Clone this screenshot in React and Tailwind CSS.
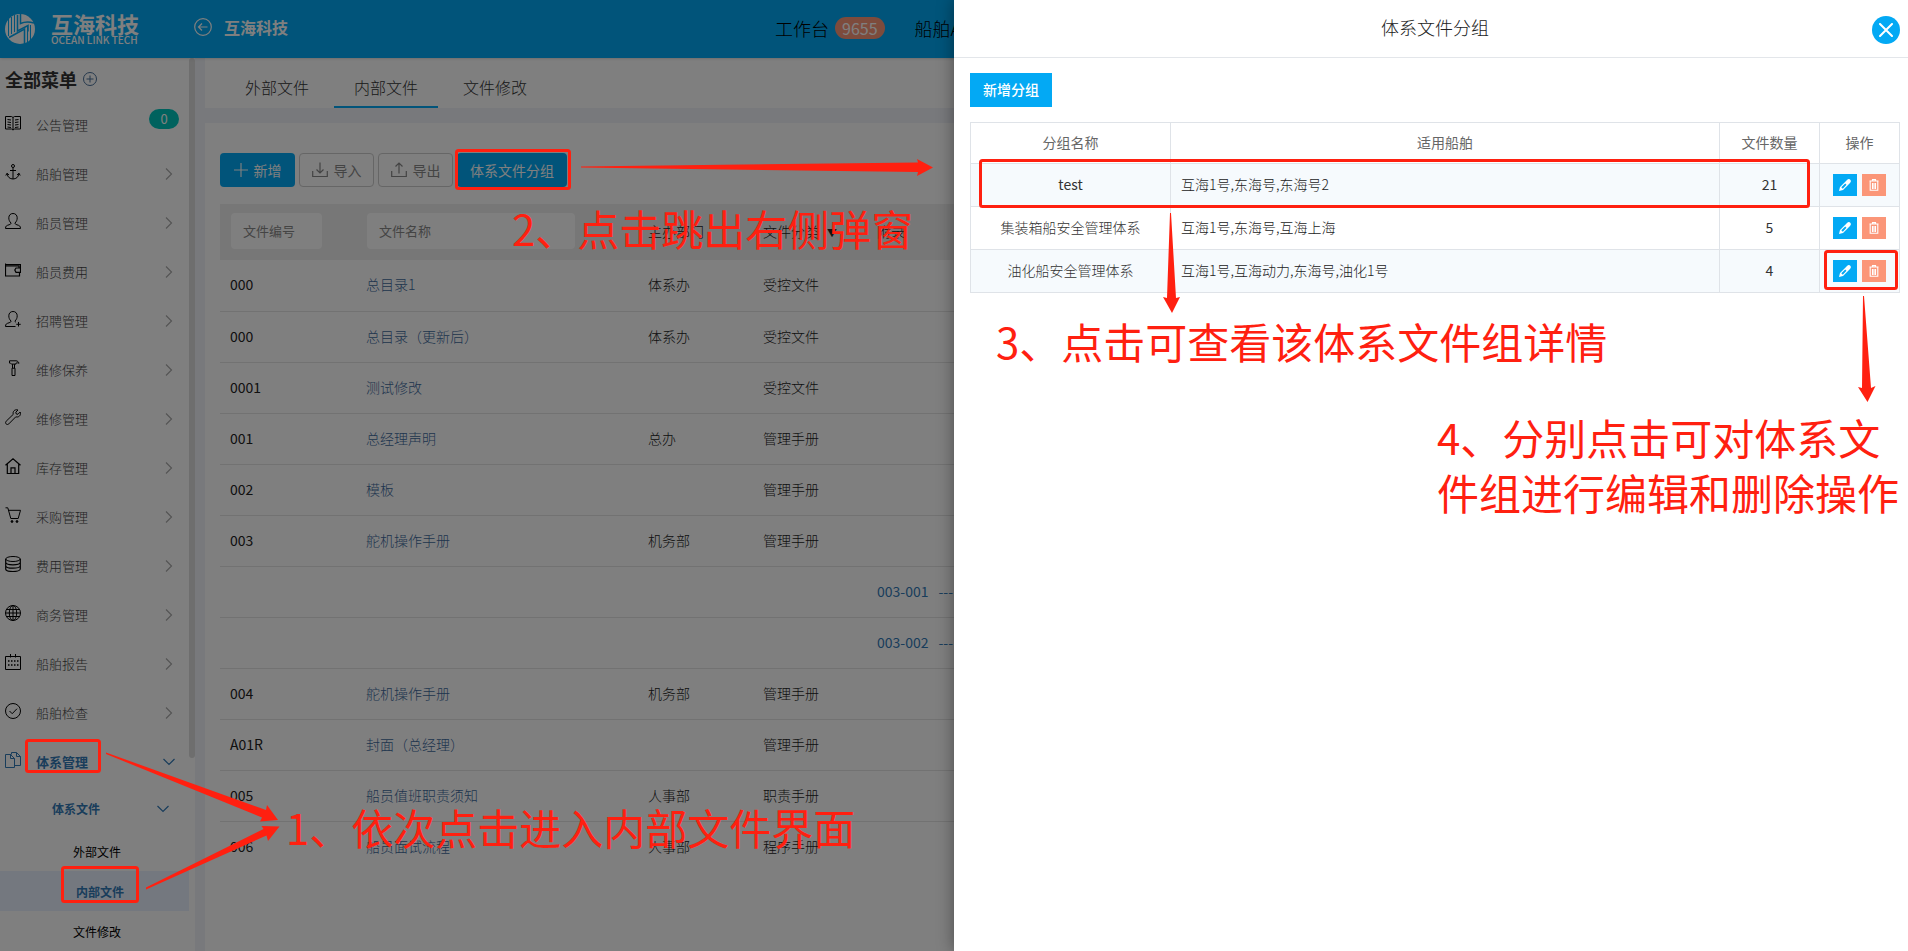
import { useState } from "react";

const fontStack = "font-['Noto_Sans_CJK_SC',sans-serif]";

/* ---------- icons ---------- */

const Icon = ({ children, className = "w-4 h-4" }) => (
    <svg
        viewBox="0 0 16 16"
        className={`flex-shrink-0 ${className}`}
        fill="none"
        stroke="currentColor"
        strokeWidth="1"
        aria-hidden="true"
    >
        {children}
    </svg>
);

const BookIcon = () => (
    <Icon>
        <path d="M8 2.500 6.500 1.500H.5v12.500h6L8 15l1.500-1h6V1.500h-6L8 2.500V15" />
        <path d="M2.500 4.500 6 5M2.500 7 6 7.500M2.500 9.500 6 10M2.500 12 6 12.500M13.500 4.500 10 5M13.500 7 10 7.500M13.500 9.500 10 10M13.500 12 10 12.500" />
    </Icon>
);

const AnchorIcon = () => (
    <Icon>
        <circle cx="8" cy="2" r="1.500" />
        <path d="M8 3.500V15M5 6.500h6M.8 11.500 2 9.300l2 1.700M15.200 11.500 14 9.300 12 11M2 9.500C2.300 13 5 15 8 15s5.700-2 6-5.500" />
    </Icon>
);

const UserIcon = () => (
    <Icon>
        <path d="M6 10C4.500 8.500 3.800 7 3.800 4.800 3.800 2.200 5.500.5 8 .5s4.200 1.700 4.200 4.300c0 2.200-.7 3.700-2.200 5.200 0 1 .5 1.300 2 1.800 2.200.7 3.500 1 3.500 3.700H.5c0-2.700 1.300-3 3.500-3.700 1.500-.5 2-.8 2-1.800Z" />
    </Icon>
);

const UserPlusIcon = () => (
    <Icon>
        <path d="M10.500 15.500H.5c0-2.700 1.300-3 3.500-3.700 1.500-.5 2-.8 2-1.800C4.500 8.500 3.800 7 3.800 4.800 3.800 2.200 5.500.5 8 .5s4.200 1.700 4.200 4.300c0 2.200-.7 3.700-2.200 5.200 0 .6.200 1 .8 1.300M13.500 11v4.500M11.300 13.300h4.400" />
    </Icon>
);

const WalletIcon = () => (
    <Icon>
        <path d="M.5 2.500h15v3M.5 1.500v12.500h14v-3.500M.5 3.800h13.500v2M15.500 6H11l-1.200 2L11 10.300h4.500Z" strokeWidth="1.200" />
    </Icon>
);

const HammerIcon = () => (
    <Icon>
        <path d="M4.500.8h6.500c1.500 0 2.500 1 3 2.500-1.200-.6-2-.6-3-.2v1H7c-.8 0-1-1-2.500-1ZM7.500 4.200v4M9.500 4.200v4M7 8.200h3v7.300H7Z" />
    </Icon>
);

const WrenchIcon = () => (
    <Icon>
        <path d="M13 1 10.800 3.200l.4 1.700 1.700.4L15.200 3c.6 1.800.2 3.200-.8 4.100-1 .9-2.300 1.100-3.600.7l-7 7.100c-.8.800-2 .8-2.700 0-.7-.7-.7-1.900.1-2.700L8.300 5.300C7.900 4 8.100 2.800 9 1.800c.9-1 2.400-1.300 4-.8Z" />
    </Icon>
);

const HomeIcon = () => (
    <Icon>
        <path d="M.5 7.300 8 .8l7.500 6.500M2.300 6v9.500h11.400V6M6 15.500V9.800h4v5.700" strokeWidth="1.200" />
    </Icon>
);

const CartIcon = () => (
    <Icon>
        <path d="M.5.800h2.300l3 10.700h7.400l2.300-8.200H3.600" />
        <circle cx="7" cy="14.500" r=".9" fill="currentColor" />
        <circle cx="12" cy="14.500" r=".9" fill="currentColor" />
    </Icon>
);

const CoinsIcon = () => (
    <Icon>
        <ellipse cx="8" cy="3" rx="7.300" ry="2.500" />
        <path
            d="M.7 3v10c0 1.400 3.300 2.500 7.300 2.500s7.300-1.100 7.300-2.500V3M.7 6.300c0 1.400 3.300 2.500 7.300 2.500s7.300-1.100 7.300-2.500M.7 9.700c0 1.400 3.300 2.500 7.300 2.500s7.300-1.100 7.300-2.500"
            strokeWidth="1.200"
        />
    </Icon>
);

const GlobeIcon = () => (
    <Icon>
        <circle cx="8" cy="8" r="7.500" />
        <ellipse cx="8" cy="8" rx="3.700" ry="7.500" />
        <path d="M8 .5v15M.5 8h15M1.500 4.500h13M1.500 11.500h13" />
    </Icon>
);

const CalendarIcon = () => (
    <Icon>
        <path d="M.5 2.500h15v13H.5ZM5.500 0v3.500M10.500 0v3.500" />
        <path d="M3 7h1.500M6 7h1.500M9 7h1.500M12 7h1.500M3 11h1.500M6 11h1.500M9 11h1.500M12 11h1.500" strokeWidth="1.500" />
    </Icon>
);

const CheckIcon = () => (
    <Icon>
        <circle cx="8" cy="8" r="7.500" />
        <path d="m4.500 8 2.700 2.700 4.800-5" />
    </Icon>
);

const FilesIcon = () => (
    <Icon>
        <path d="M6 2.500H.5v13h9V6.500l-4-4v4h4M6.500 2.500v-2h5l4 4v9h-6M11.500.5v4h4" />
    </Icon>
);

const Chevron = ({ down }) => (
    <svg viewBox="0 0 12 12" className="w-3 h-3" fill="none" stroke="currentColor" strokeWidth="1.200" aria-hidden="true">
        {down ? <path d="M.5 3 6 8.500 11.500 3" /> : <path d="M3 .5 8.500 6 3 11.500" />}
    </svg>
);

const LogoMark = () => (
    <svg viewBox="0 0 30 30" className="w-[30px] h-[30px]" aria-hidden="true">
        <circle cx="15" cy="15" r="15" fill="#fff" />
        <g fill="none" stroke="#03a9f4">
            <path d="M3.500 5v17M6.500 3v17M9.500 1v17" />
            <path d="M15.500 0v9.500C20 7.500 24 7.500 29 9" strokeWidth="1.500" />
            <path d="M12.500 1v16L23 11.500v6" strokeWidth="1.500" />
            <path d="M4 23.500 19.500 15v15" strokeWidth="1.500" />
            <path d="M22.500 13v16M25.500 11v15" />
        </g>
    </svg>
);

/* ---------- data ---------- */

const menuItems = [
    { name: "公告管理", icon: BookIcon, badge: 0 },
    { name: "船舶管理", icon: AnchorIcon },
    { name: "船员管理", icon: UserIcon },
    { name: "船员费用", icon: WalletIcon },
    { name: "招聘管理", icon: UserPlusIcon },
    { name: "维修保养", icon: HammerIcon },
    { name: "维修管理", icon: WrenchIcon },
    { name: "库存管理", icon: HomeIcon },
    { name: "采购管理", icon: CartIcon },
    { name: "费用管理", icon: CoinsIcon },
    { name: "商务管理", icon: GlobeIcon },
    { name: "船舶报告", icon: CalendarIcon },
    { name: "船舶检查", icon: CheckIcon },
    { name: "体系管理", icon: FilesIcon, open: true }
];

const subItems = ["外部文件", "内部文件", "文件修改"];

const files = [
    { code: "000", name: "总目录1", dept: "体系办", type: "受控文件" },
    { code: "000", name: "总目录（更新后）", dept: "体系办", type: "受控文件" },
    { code: "0001", name: "测试修改", dept: "", type: "受控文件" },
    { code: "001", name: "总经理声明", dept: "总办", type: "管理手册" },
    { code: "002", name: "模板", dept: "", type: "管理手册" },
    { code: "003", name: "舵机操作手册", dept: "机务部", type: "管理手册" },
    { child: "003-001" },
    { child: "003-002" },
    { code: "004", name: "舵机操作手册", dept: "机务部", type: "管理手册" },
    { code: "A01R", name: "封面（总经理）", dept: "", type: "管理手册" },
    { code: "005", name: "船员值班职责须知", dept: "人事部", type: "职责手册" },
    { code: "006", name: "船员面试流程", dept: "人事部", type: "程序手册" }
];

const groups = [
    { name: "test", ships: "互海1号,东海号,东海号2", count: 21 },
    { name: "集装箱船安全管理体系", ships: "互海1号,东海号,互海上海", count: 5 },
    { name: "油化船安全管理体系", ships: "互海1号,互海动力,东海号,油化1号", count: 4 }
];

/* ---------- page ---------- */

const Header = () => (
    <header className="relative flex items-center h-[58px] bg-[#03a9f4] text-white shadow">
        <div className="flex items-center gap-4 w-[194px] pl-[5px]">
            <LogoMark />
            <div className="flex flex-col">
                <span className="text-[22px] leading-[22px] font-bold">互海科技</span>
                <span className="text-[10px] leading-[12px] font-medium">OCEAN LINK TECH</span>
            </div>
        </div>
        <button aria-label="返回" className="mr-3 mb-1">
            <svg viewBox="0 0 18 18" className="w-[18px] h-[18px]" fill="none" stroke="currentColor" strokeWidth="1.200">
                <circle cx="9" cy="9" r="8.300" />
                <path d="M13.500 9h-9M8 5.500 4.500 9 8 12.500" />
            </svg>
        </button>
        <span className="mb-1 font-bold">互海科技</span>
        <nav className="flex items-center gap-[30px] ml-[487px] mb-[2px] text-lg font-light text-black whitespace-nowrap">
            <a href="#work" className="flex items-center gap-[6px]">
                工作台
                <span className="px-[7px] rounded-full bg-[#fb9678] text-base leading-[22px] font-normal text-white">9655</span>
            </a>
            <a href="#ais">船舶A</a>
        </nav>
    </header>
);

const Sidebar = () => {
    const [active, setActive] = useState("内部文件");

    return (
        <aside className="flex w-[195px] flex-shrink-0 bg-white">
            <div className="flex-1">
                <div className="flex items-center gap-[6px] h-[42px] pl-[5px] text-[#333]">
                    <h2 className="text-lg font-bold">全部菜单</h2>
                    <svg viewBox="0 0 14 14" className="w-[14px] h-[14px] text-[#4a7099]" fill="none" stroke="currentColor" aria-hidden="true">
                        <circle cx="7" cy="7" r="6.500" />
                        <path d="M7 3.500v7M3.500 7h7" />
                    </svg>
                </div>
                <ul>
                    {menuItems.map((item) => (
                        <li key={item.name}>
                            <button
                                className={`flex items-center w-full h-[49px] pl-[5px] pr-[14px] text-[13px] ${
                                    item.open ? "font-bold text-[#337ab7]" : "font-light text-[#444]"
                                }`}
                            >
                                <span className={`mb-1 mr-[15px] ${item.open ? "" : "text-black"}`}>
                                    <item.icon />
                                </span>
                                <span className="flex-1 text-left">{item.name}</span>
                                {item.badge === undefined ? (
                                    <span className={item.open ? "" : "text-[#aaa]"}>
                                        <Chevron down={item.open} />
                                    </span>
                                ) : (
                                    <span className="w-[30px] mb-3 -mr-1 rounded-full bg-[#00c5bd] text-center leading-5 font-normal text-white">
                                        {item.badge}
                                    </span>
                                )}
                            </button>
                        </li>
                    ))}
                </ul>
                <button className="flex items-center justify-between w-full h-[45px] pl-[52px] pr-5 text-xs font-bold text-[#337ab7]">
                    体系文件
                    <Chevron down />
                </button>
                <ul>
                    {subItems.map((name) => (
                        <li key={name}>
                            <button
                                onClick={() => setActive(name)}
                                className={`w-full h-10 pt-[2px] text-left text-xs ${
                                    active === name ? "pl-[76px] bg-[#e8f1ff] font-bold text-[#337ab7]" : "pl-[73px] text-black"
                                }`}
                            >
                                {name}
                            </button>
                        </li>
                    ))}
                </ul>
            </div>
            <div className="w-[6px] bg-white">
                <div className="h-[700px] rounded-full bg-[#dcdcdc]" />
            </div>
        </aside>
    );
};

const Tabs = () => {
    const [tab, setTab] = useState("内部文件");

    return (
        <div className="flex items-end gap-[5px] h-[50px] pl-5 bg-white">
            {subItems.map((name) => (
                <button
                    key={name}
                    onClick={() => setTab(name)}
                    className={`h-10 px-5 border-b-2 font-light text-[#333] ${tab === name ? "border-[#03a9f4]" : "border-transparent"}`}
                >
                    {name}
                </button>
            ))}
        </div>
    );
};

const Toolbar = () => (
    <div className="flex gap-1 mb-[17px] text-sm">
        <button className="flex items-center justify-center gap-[6px] w-[75px] h-[34px] rounded bg-[#03a9f4] text-white">
            <Icon className="w-[14px] h-[14px]">
                <path d="M8 0v16M0 8h16" strokeWidth="1.300" />
            </Icon>
            新增
        </button>
        <button className="flex items-center justify-center gap-[6px] w-[75px] h-[34px] border border-[#ccc] rounded text-[#888]">
            <Icon>
                <path d="M.7 9v5.500h14.600V9M8 .5V11M4.500 7.500 8 11l3.500-3.500" strokeWidth="1.200" />
            </Icon>
            导入
        </button>
        <button className="flex items-center justify-center gap-[6px] w-[75px] h-[34px] border border-[#ccc] rounded text-[#888]">
            <Icon>
                <path d="M.7 9v5.500h14.600V9M8 11.500V1M4.500 4.500 8 1l3.500 3.500" strokeWidth="1.200" />
            </Icon>
            导出
        </button>
        <button className="w-[110px] h-[34px] rounded bg-[#03a9f4] text-white">体系文件分组</button>
    </div>
);

const FileTable = () => (
    <table className="w-full table-fixed text-sm font-light text-[#222]">
        <colgroup>
            <col className="w-[136px]" />
            <col className="w-[282px]" />
            <col className="w-[115px]" />
            <col className="w-[114px]" />
            <col />
        </colgroup>
        <thead>
            <tr className="h-14 bg-[#eee] text-left">
                <th className="pl-[11px] pb-[2px]">
                    <input
                        aria-label="文件编号"
                        placeholder="文件编号"
                        className="block w-[91px] h-9 px-3 pb-[2px] rounded bg-white text-[13px] font-normal placeholder:text-[#888]"
                    />
                </th>
                <th className="pl-[11px] pb-[2px]">
                    <input
                        aria-label="文件名称"
                        placeholder="文件名称"
                        className="block w-[208px] h-9 px-3 pb-[2px] rounded bg-white text-[13px] font-normal placeholder:text-[#888]"
                    />
                </th>
                <th className="pl-[10px] pb-[2px] font-light">主办部门</th>
                <th className="pl-[10px] pb-[2px] font-light">
                    文件分类<span className="ml-2 text-[10px]">▼</span>
                </th>
                <th className="pl-[10px] pb-[2px] font-light">附录</th>
            </tr>
        </thead>
        <tbody className="divide-y divide-[#e4e4e4]">
            {files.map((file, index) =>
                file.child ? (
                    <tr key={index} className="h-[51px]">
                        <td colSpan={4} />
                        <td className="pl-[10px] pb-[2px] font-normal text-[#337ab7]">
                            <a href="#file">{file.child}</a>
                            <span className="ml-[10px]">---</span>
                        </td>
                    </tr>
                ) : (
                    <tr key={index} className="h-[51px]">
                        <td className="pl-[10px] pb-[2px] font-normal">{file.code}</td>
                        <td className="pl-[10px] pb-[2px]">
                            <a href="#file" className="text-[#40699c]">{file.name}</a>
                        </td>
                        <td className="pl-[10px] pb-[2px]">{file.dept}</td>
                        <td className="pl-[10px] pb-[2px]">{file.type}</td>
                        <td />
                    </tr>
                )
            )}
        </tbody>
    </table>
);

const PencilIcon = () => (
    <svg viewBox="0 0 12 12" className="w-3 h-3" aria-hidden="true">
        <path fill="#fff" fillRule="evenodd" d="M0 12 1 8 8 1C9.200-.2 10.500-.1 11.300.7c.8.8.9 2.100-.3 3.300L4 11ZM2.300 8.200l1.500 1.500 3.700-3.900L6.200 4.500Z" />
    </svg>
);

const TrashIcon = () => (
    <svg viewBox="0 0 10 12" className="w-[10px] h-3" fill="none" stroke="#fff" aria-hidden="true">
        <path d="M.5 2h9M3.500 2V.6h3V2M1.200 2v9.300h7.600V2M3.500 4v6M5 4v6M6.500 4v6" strokeWidth="1.100" />
    </svg>
);

const Drawer = () => (
    <section className="absolute right-0 inset-y-0 w-1/2 bg-white shadow-[0_0_16px_rgba(0,0,0,0.4)]">
        <div className="relative flex items-center justify-center h-[58px] pb-1 pl-2 border-b border-[#e3e6ea]">
            <h2 className="text-lg font-light text-[#222]">体系文件分组</h2>
            <button aria-label="关闭" className="absolute right-2 top-4 flex items-center justify-center w-7 h-7 rounded-full bg-[#03a9f4]">
                <svg viewBox="0 0 14 14" className="w-[14px] h-[14px]" stroke="#fff" strokeWidth="2" strokeLinecap="round">
                    <path d="m1 1 12 12M13 1 1 13" />
                </svg>
            </button>
        </div>
        <div className="pt-[15px] pl-4 pr-2">
            <button className="h-[34px] px-[13px] pb-[2px] mb-[15px] bg-[#03a9f4] text-sm font-medium text-white">新增分组</button>
            <table className="w-full table-fixed border-collapse text-center text-sm text-[#333]">
                <colgroup>
                    <col className="w-[200px]" />
                    <col />
                    <col className="w-[100px]" />
                    <col className="w-[80px]" />
                </colgroup>
                <thead>
                    <tr className="h-[41px] text-[#666]">
                        {["分组名称", "适用船舶", "文件数量", "操作"].map((title) => (
                            <th key={title} className="pb-[2px] border border-[#dfe3e8] font-normal">{title}</th>
                        ))}
                    </tr>
                </thead>
                <tbody>
                    {groups.map((group) => (
                        <tr key={group.name} className="h-[43px] odd:bg-[#f6fafd]">
                            <td className={`pb-[2px] border border-[#dfe3e8] ${group.name === "test" ? "font-normal" : "font-light"}`}>
                                {group.name}
                            </td>
                            <td className="pb-[2px] border border-[#dfe3e8] px-[10px] text-left font-light text-[#222]">{group.ships}</td>
                            <td className="pb-[2px] border border-[#dfe3e8]">{group.count}</td>
                            <td className="border border-[#dfe3e8]">
                                <div className="flex justify-center gap-[5px]">
                                    <button aria-label="编辑" className="flex items-center justify-center w-6 h-[22px] bg-[#03a9f4]">
                                        <PencilIcon />
                                    </button>
                                    <button aria-label="删除" className="flex items-center justify-center w-6 h-[22px] bg-[#fb9678]">
                                        <TrashIcon />
                                    </button>
                                </div>
                            </td>
                        </tr>
                    ))}
                </tbody>
            </table>
        </div>
    </section>
);

// Red frames, arrows and step notes drawn over the page
const Guide = () => (
    <div className="absolute inset-0 pointer-events-none text-[42px] leading-[55px] text-[#ff2010] whitespace-nowrap">
        <svg className="absolute inset-0 w-full h-full" aria-hidden="true">
            <g fill="none" stroke="currentColor" strokeWidth="3">
                <rect x="26.500" y="740.500" width="73" height="31" rx="2" />
                <rect x="62.500" y="867.500" width="75" height="34" rx="2" />
                <rect x="456.500" y="150.500" width="113" height="38" rx="2" />
                <rect x="980.500" y="160.500" width="828" height="46" rx="2" />
                <rect x="1825.500" y="251.500" width="71" height="37" rx="2" />
            </g>
            <g fill="currentColor">
                <path d="M106 752.500 266 810l1-5 11 15-18 1.500 2-4L106 754Z" />
                <path d="M146 887.500 263.500 829l-2-3 18 .500-11.500 14.500-1.500-5.500L146 889.500Z" />
                <path d="M581 166.500 918 162.500l-1-3.500 16 8.500-16 8.500 1-4L581 167.500Z" />
                <path d="M1170 213h1l5 85 4-1-8 16-9-16 4 1Z" />
                <path d="M1863 296h1l7 92 4.500-2-8 16-9.500-15 4 1Z" />
            </g>
        </svg>
        <p className="absolute left-[286px] top-[799px]">1、依次点击进入内部文件界面</p>
        <p className="absolute left-[512px] top-[200px]">2、点击跳出右侧弹窗</p>
        <p className="absolute left-[996px] top-[313px]">3、点击可查看该体系文件组详情</p>
        <p className="absolute left-[1437px] top-[409px]">
            4、分别点击可对体系文
            <br />
            件组进行编辑和删除操作
        </p>
    </div>
);

const App = () => (
    <div className={`relative flex flex-col h-screen overflow-hidden bg-[#f0f3f8] ${fontStack}`}>
        <Header />
        <div className="flex flex-1 min-h-0 gap-[10px]">
            <Sidebar />
            <main className="flex flex-col flex-1 gap-[15px] min-w-0">
                <Tabs />
                <div className="flex-1 px-[15px] pt-[30px] bg-white">
                    <Toolbar />
                    <FileTable />
                </div>
            </main>
        </div>
        <div className="absolute inset-0 bg-black/50" />
        <Drawer />
        <Guide />
    </div>
);

export default App;
